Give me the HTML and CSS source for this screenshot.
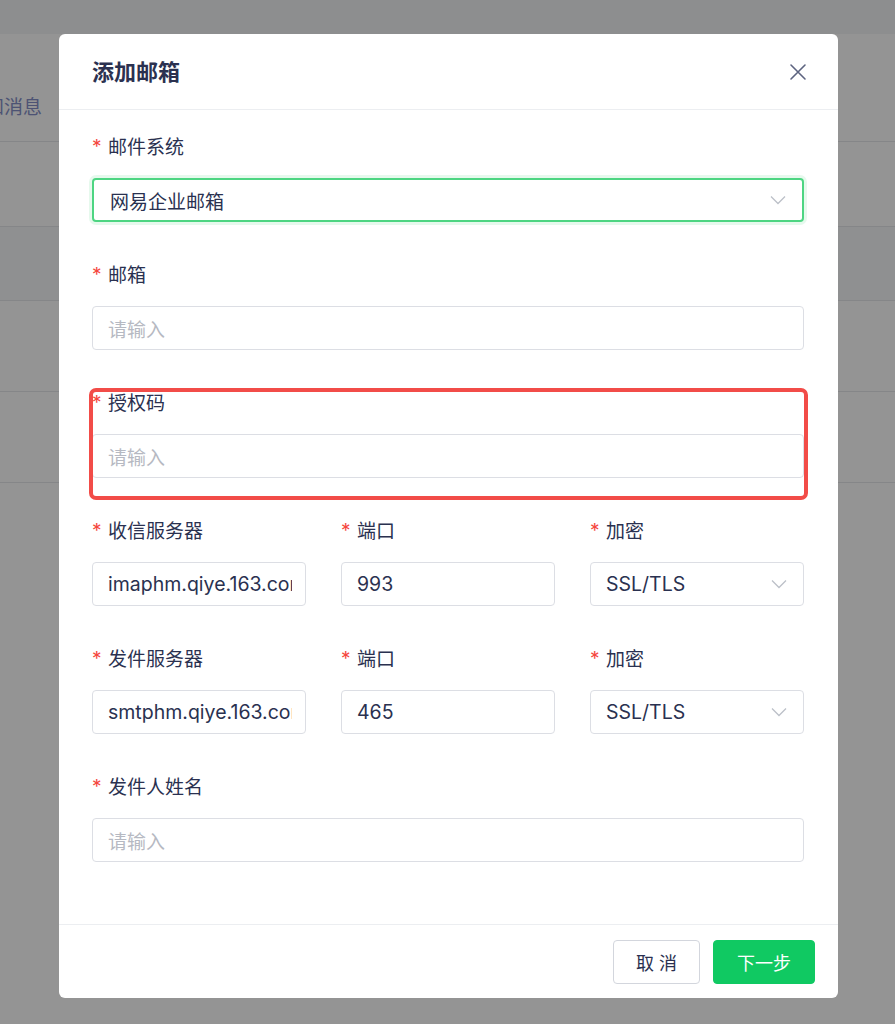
FILE: index.html
```html
<!DOCTYPE html>
<html lang="zh-CN">
<head>
<meta charset="utf-8">
<title>添加邮箱</title>
<link rel="stylesheet" href="styles.css">
</head>
<body>
<div class="page">
  <div class="page-top"></div>
  <div class="page-card">
    <div class="bg-row bg-title"><span class="bg-text">通知消息</span></div>
    <div class="bg-row bg-gap"></div>
    <div class="bg-row bg-head"></div>
    <div class="bg-row bg-line"></div>
    <div class="bg-row bg-line"></div>
    <div class="bg-row bg-rest"></div>
  </div>
</div>
<div class="mask"></div>

<div class="modal">
  <div class="modal-header">
    <div class="modal-title">添加邮箱</div>
    <svg class="close" width="18" height="18" viewBox="0 0 18 18"><path d="M2 2 L16 16 M16 2 L2 16" stroke="#5d6480" stroke-width="1.6" fill="none" stroke-linecap="round"/></svg>
  </div>
  <div class="modal-body">
    <div class="field">
      <div class="label"><span class="req">*</span>邮件系统</div>
      <div class="input select focused"><span class="val">网易企业邮箱</span>
        <svg class="chev" width="16" height="10" viewBox="0 0 16 10"><polyline points="1,1.5 8,8.5 15,1.5" stroke="#bcc0c8" stroke-width="1.3" fill="none"/></svg>
      </div>
    </div>
    <div class="field">
      <div class="label"><span class="req">*</span>邮箱</div>
      <div class="input"><span class="ph">请输入</span></div>
    </div>
    <div class="field highlighted">
      <div class="label"><span class="req">*</span>授权码</div>
      <div class="input"><span class="ph">请输入</span></div>
      <div class="annot"></div>
    </div>
    <div class="field-row">
      <div class="field">
        <div class="label"><span class="req">*</span>收信服务器</div>
        <div class="input"><span class="val">imaphm.qiye.163.com</span></div>
      </div>
      <div class="field">
        <div class="label"><span class="req">*</span>端口</div>
        <div class="input"><span class="val">993</span></div>
      </div>
      <div class="field">
        <div class="label"><span class="req">*</span>加密</div>
        <div class="input select"><span class="val">SSL/TLS</span>
          <svg class="chev" width="16" height="10" viewBox="0 0 16 10"><polyline points="1,1.5 8,8.5 15,1.5" stroke="#bcc0c8" stroke-width="1.3" fill="none"/></svg>
        </div>
      </div>
    </div>
    <div class="field-row">
      <div class="field">
        <div class="label"><span class="req">*</span>发件服务器</div>
        <div class="input"><span class="val">smtphm.qiye.163.com</span></div>
      </div>
      <div class="field">
        <div class="label"><span class="req">*</span>端口</div>
        <div class="input"><span class="val">465</span></div>
      </div>
      <div class="field">
        <div class="label"><span class="req">*</span>加密</div>
        <div class="input select"><span class="val">SSL/TLS</span>
          <svg class="chev" width="16" height="10" viewBox="0 0 16 10"><polyline points="1,1.5 8,8.5 15,1.5" stroke="#bcc0c8" stroke-width="1.3" fill="none"/></svg>
        </div>
      </div>
    </div>
    <div class="field">
      <div class="label"><span class="req">*</span>发件人姓名</div>
      <div class="input"><span class="ph">请输入</span></div>
    </div>
  </div>
  <div class="modal-footer">
    <button class="btn btn-default">取 消</button>
    <button class="btn btn-primary">下一步</button>
  </div>
</div>
</body>
</html>
```
FILE: styles.css
```css
* { box-sizing: border-box; }
html, body { margin: 0; padding: 0; }
body {
  width: 895px;
  height: 1024px;
  overflow: hidden;
  font-family: Inter, "Noto Sans CJK SC", sans-serif;
  background: #f3f4f6;
  position: relative;
}
.page { width: 895px; height: 1024px; display: flex; flex-direction: column; }
.page-top { height: 34px; background: #f3f4f6; }
.page-card { flex: 1; background: #ffffff; display: flex; flex-direction: column; }
.bg-row { border-bottom: 1px solid #e6e7ea; }
.bg-title { height: 108px; display: flex; align-items: center; overflow: hidden; }
.bg-text { margin-left: -34px; font-size: 19px; color: #8590c8; margin-top: 35px; }
.bg-gap { height: 85px; }
.bg-head { height: 74px; background: #f7f8fa; }
.bg-line { height: 91px; }
.bg-rest { flex: 1; border-bottom: none; }
.mask { position: absolute; inset: 0; background: rgba(0,0,0,0.42); }

.modal {
  position: absolute;
  left: 59px;
  top: 34px;
  width: 779px;
  height: 964px;
  background: #ffffff;
  border-radius: 6px;
  display: flex;
  flex-direction: column;
}
.modal-header {
  height: 76px;
  flex: none;
  display: flex;
  align-items: center;
  justify-content: space-between;
  padding: 0 31px 0 33px;
  border-bottom: 1px solid #eceef1;
}
.modal-title { font-size: 22px; font-weight: 700; color: #2b3150; line-height: 30px; }
.close { display: block; }

.modal-body { flex: 1; padding: 27px 34px 0 33px; }
.field { margin-bottom: 43px; position: relative; min-width: 0; }
.label {
  font-size: 19px;
  line-height: 22px;
  height: 22px;
  color: #2a3150;
  margin-bottom: 19px;
  display: flex;
  align-items: center;
}
.req { color: #f5463e; display: inline-block; width: 16px; font-size: 19px; position: relative; top: -1px; }
.input {
  height: 44px;
  border: 1px solid #dcdee4;
  border-radius: 4px;
  padding: 0 13px 0 15px;
  display: flex;
  align-items: center;
  font-size: 19.5px;
  color: #2a3150;
  white-space: nowrap;
  overflow: hidden;
  background: #fff;
  min-width: 0;
}
.input .val, .input .ph { overflow: hidden; flex: 1; min-width: 0; }
.ph { color: #b6b9c2; font-size: 19px; }
.select { padding-right: 16px; }
.chev { flex: none; margin-left: 8px; }
.focused {
  border: 2px solid #4dd582;
  box-shadow: 0 0 0 3px rgba(77,213,130,0.14);
  padding-left: 16px;
  font-size: 19px;
}
.annot {
  position: absolute;
  left: -3px;
  top: -5px;
  width: 719px;
  height: 112px;
  border: 4px solid #f24c48;
  border-radius: 7px;
  pointer-events: none;
}
.field-row {
  display: grid;
  grid-template-columns: repeat(3, minmax(0, 1fr));
  column-gap: 35px;
}

.modal-footer {
  height: 74px;
  flex: none;
  border-top: 1px solid #eceef1;
  display: flex;
  align-items: center;
  justify-content: flex-end;
  gap: 13px;
  padding-right: 23px;
}
.btn {
  height: 44px;
  border-radius: 4px;
  font-family: Inter, "Noto Sans CJK SC", sans-serif;
  font-size: 18px;
  cursor: pointer;
}
.btn-default {
  width: 87px;
  background: #fff;
  border: 1px solid #d3d6dd;
  color: #2b3150;
}
.btn-primary {
  width: 102px;
  background: #10c962;
  border: 1px solid #10c962;
  color: #fff;
}
```
